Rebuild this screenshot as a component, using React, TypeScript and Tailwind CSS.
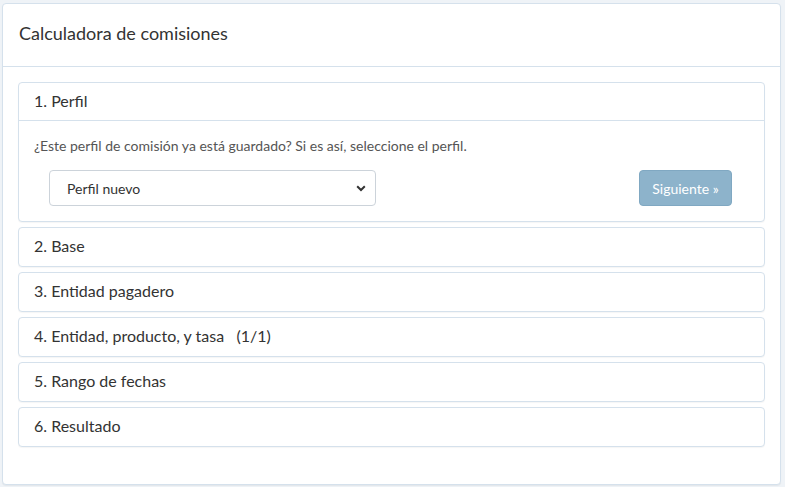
const steps = [
  "2. Base",
  "3. Entidad pagadero",
  "4. Entidad, producto, y tasa\u00a0\u00a0\u00a0(1/1)",
  "5. Rango de fechas",
  "6. Resultado",
];

function Panel({ title }: { title: string }) {
  return (
    <div className="rounded-[4px] border border-[#d5e1ec] bg-white shadow-[0_1px_1px_rgba(0,0,0,0.04)]">
      <div className="flex h-[38px] items-center px-[15px] pb-[2px] text-[16px] text-[#333]">
        {title}
      </div>
    </div>
  );
}

export default function App() {
  return (
    <div
      className="min-h-[487px] bg-[#eff3f7] pb-[4px] pl-[2px] pr-[4px] pt-[3px]"
      style={{ fontFamily: "Lato, 'Open Sans', sans-serif" }}
    >
      <div className="rounded-[4px] border border-[#d5e1ec] bg-white shadow-[0_1px_1px_rgba(0,0,0,0.05)]">
        <div className="flex h-[63px] items-center border-b border-[#d5e1ec] px-[16px] pb-[4px] text-[18px] text-[#333]">
          Calculadora de comisiones
        </div>
        <div className="flex flex-col gap-[5px] px-[15px] pb-[37px] pt-[15px]">
          <div className="rounded-[4px] border border-[#d5e1ec] bg-white shadow-[0_1px_1px_rgba(0,0,0,0.04)]">
            <div className="flex h-[38px] items-center border-b border-[#d5e1ec] px-[15px] pb-[2px] text-[16px] text-[#333]">
              1. Perfil
            </div>
            <div className="px-[15px] pb-[15px] pt-[15px]">
              <p className="text-[14px] leading-[20px] text-[#555]">
                ¿Este perfil de comisión ya está guardado? Si es así, seleccione el perfil.
              </p>
              <div className="mt-[14px] flex items-center justify-between pl-[15px] pr-[17px]">
                <div className="relative h-[36px] w-[327px] rounded-[4px] border border-[#ccd3da] bg-white">
                  <div className="flex h-full items-center pl-[17px] text-[14px] text-[#333]">
                    Perfil nuevo
                  </div>
                  <svg
                    className="absolute right-[9px] top-[14px]"
                    width="10"
                    height="7"
                    viewBox="0 0 10 7"
                  >
                    <path d="M1.2 1.3 L5 5 L8.8 1.3" fill="none" stroke="#333" strokeWidth="2" />
                  </svg>
                </div>
                <button className="h-[36px] w-[93px] rounded-[4px] border border-[#80a8c2] bg-[#8db3cb] text-[14px] text-white">
                  Siguiente »
                </button>
              </div>
            </div>
          </div>
          {steps.map((s) => (
            <Panel key={s} title={s} />
          ))}
        </div>
      </div>
    </div>
  );
}
